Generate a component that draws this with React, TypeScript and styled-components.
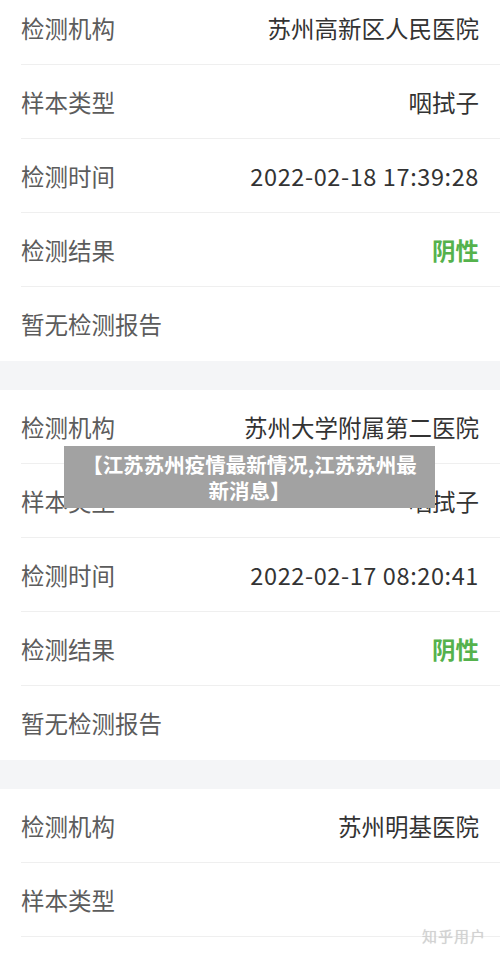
import styled, { createGlobalStyle } from 'styled-components';

const GlobalStyle = createGlobalStyle`
  html, body {
    margin: 0;
    padding: 0;
    background: #ffffff;
  }
  body {
    font-family: "Noto Sans CJK SC", "Noto Sans", sans-serif;
    overflow: hidden;
  }
`;

type Row = { label: string; value?: string; positive?: boolean; numeric?: boolean };

const records: Row[][] = [
  [
    { label: '检测机构', value: '苏州高新区人民医院' },
    { label: '样本类型', value: '咽拭子' },
    { label: '检测时间', value: '2022-02-18 17:39:28', numeric: true },
    { label: '检测结果', value: '阴性', positive: true },
    { label: '暂无检测报告' },
  ],
  [
    { label: '检测机构', value: '苏州大学附属第二医院' },
    { label: '样本类型', value: '咽拭子' },
    { label: '检测时间', value: '2022-02-17 08:20:41', numeric: true },
    { label: '检测结果', value: '阴性', positive: true },
    { label: '暂无检测报告' },
  ],
  [
    { label: '检测机构', value: '苏州明基医院' },
    { label: '样本类型', value: '' },
  ],
];

/** 核酸检测记录 */
export default function App() {
  return (
    <>
      <GlobalStyle />
      <Page>
        {records.map((rows, i) => (
          <RecordCard key={i}>
            {rows.map((row, j) => (
              <InfoRow key={j} $note={row.value === undefined}>
                <Label>{row.label}</Label>
                {row.value !== undefined && (
                  <Value $positive={row.positive} $numeric={row.numeric}>
                    {row.value}
                  </Value>
                )}
              </InfoRow>
            ))}
          </RecordCard>
        ))}
        <TitleOverlay>
          【江苏苏州疫情最新情况,江苏苏州最
          <br />
          新消息】
        </TitleOverlay>
        <Watermark>知乎用户</Watermark>
      </Page>
    </>
  );
}

const Page = styled.div`
  position: relative;
  display: flex;
  flex-direction: column;
  gap: 29px;
  width: 500px;
  height: 964px;
  margin-top: -9px;
  background-color: #f4f5f7;
`;

const RecordCard = styled.section`
  display: flex;
  flex-direction: column;
  background-color: #ffffff;

  &:last-of-type {
    flex: 1;
  }
`;

const InfoRow = styled.div<{ $note?: boolean }>`
  display: flex;
  align-items: center;
  justify-content: space-between;
  height: 74px;
  margin-left: 21px;
  padding-right: 21px;
  box-sizing: border-box;
  border-bottom: ${({ $note }) => ($note ? 'none' : '1px solid #efefef')};
`;

const Label = styled.span`
  font-size: 23.5px;
  color: #5c5c5c;
`;

const Value = styled.span<{ $positive?: boolean; $numeric?: boolean }>`
  font-size: 23.5px;
  color: ${({ $positive }) => ($positive ? '#55b24c' : '#333333')};
  font-weight: ${({ $positive }) => ($positive ? 700 : 400)};
  letter-spacing: ${({ $numeric }) => ($numeric ? '0.6px' : '0')};
`;

const TitleOverlay = styled.div`
  position: absolute;
  top: 455px;
  left: 64px;
  width: 371px;
  height: 62px;
  box-sizing: border-box;
  display: flex;
  align-items: center;
  justify-content: center;
  text-align: center;
  background-color: #a2a2a2;
  color: #ffffff;
  font-size: 20.5px;
  font-weight: 700;
  line-height: 26px;
`;

const Watermark = styled.span`
  position: absolute;
  top: 934px;
  right: 14px;
  font-size: 15px;
  line-height: 22px;
  color: #d2d2d2;
  letter-spacing: 1px;
  text-shadow: 0 0 1px rgba(0, 0, 0, 0.15);
`;
